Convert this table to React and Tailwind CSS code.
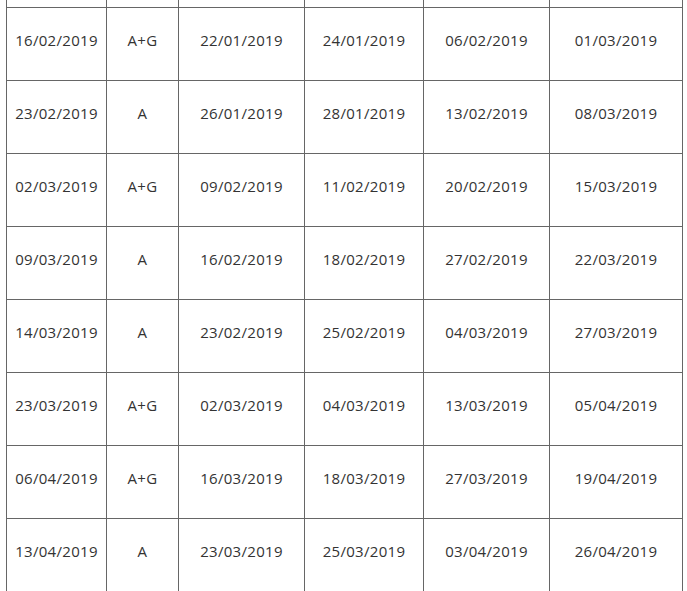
const rows = [
  ["16/02/2019", "A+G", "22/01/2019", "24/01/2019", "06/02/2019", "01/03/2019"],
  ["23/02/2019", "A", "26/01/2019", "28/01/2019", "13/02/2019", "08/03/2019"],
  ["02/03/2019", "A+G", "09/02/2019", "11/02/2019", "20/02/2019", "15/03/2019"],
  ["09/03/2019", "A", "16/02/2019", "18/02/2019", "27/02/2019", "22/03/2019"],
  ["14/03/2019", "A", "23/02/2019", "25/02/2019", "04/03/2019", "27/03/2019"],
  ["23/03/2019", "A+G", "02/03/2019", "04/03/2019", "13/03/2019", "05/04/2019"],
  ["06/04/2019", "A+G", "16/03/2019", "18/03/2019", "27/03/2019", "19/04/2019"],
  ["13/04/2019", "A", "23/03/2019", "25/03/2019", "03/04/2019", "26/04/2019"],
];

export default function App() {
  return (
    <div className="w-[687px] h-[591px] overflow-hidden bg-white">
      <div
        className="ml-[6px] w-[677px] border-l border-[#666] grid grid-cols-[100px_72px_126px_119px_126px_133px] text-[#333] text-[15px] tracking-[0.3px]"
        style={{ fontFamily: '"Open Sans", "Noto Sans", sans-serif' }}
      >
        {[0, 1, 2, 3, 4, 5].map((i) => (
          <div key={"h" + i} className="h-[8px] border-r border-b border-[#666]" />
        ))}
        {rows.map((r, ri) =>
          r.map((c, ci) => (
            <div
              key={ri + "-" + ci}
              className="h-[73px] pb-[8px] border-r border-b border-[#666] flex items-center justify-center"
            >
              {c}
            </div>
          ))
        )}
      </div>
    </div>
  );
}
